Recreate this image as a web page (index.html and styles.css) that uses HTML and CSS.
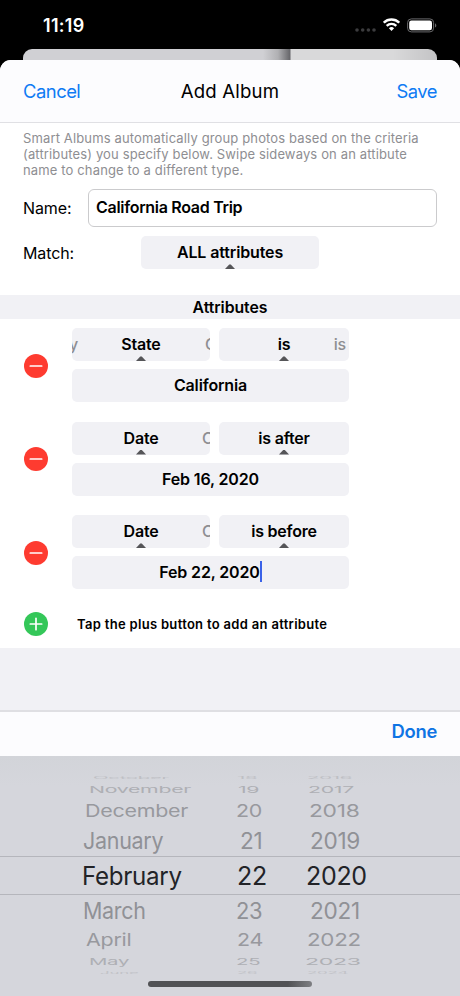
FILE: index.html
```html
<!DOCTYPE html>
<html lang="en">
<head>
<meta charset="utf-8">
<title>Add Album</title>
<link rel="stylesheet" href="styles.css">
</head>
<body>
<div class="phone">
  <div class="status">
    <span class="time">11:19</span>
    <div class="indicators">
      <svg class="dots" width="21" height="4" viewBox="0 0 21 4"><g fill="#3c3c3e"><circle cx="2" cy="2" r="1.8"/><circle cx="7.7" cy="2" r="1.8"/><circle cx="13.4" cy="2" r="1.8"/><circle cx="19" cy="2" r="1.8"/></g></svg>
      <svg class="wifi" width="17" height="13" viewBox="0 0 17 13"><g fill="none" stroke="#fff" stroke-width="2.4"><path d="M.8 4.7a11 11 0 0 1 15.4 0"/><path d="M3.7 7.8a6.9 6.9 0 0 1 9.6 0"/></g><path d="M8.5 12.9 5.9 10.2a3.8 3.8 0 0 1 5.2 0Z" fill="#fff"/></svg>
      <svg class="battery" width="30" height="15" viewBox="0 0 30 15"><rect x=".6" y=".9" width="26" height="13" rx="3.7" fill="none" stroke="#69696b" stroke-width="1"/><rect x="2.2" y="2.5" width="22.8" height="9.8" rx="2.2" fill="#fff"/><path d="M28 5.2c1.8.8 1.8 3.6 0 4.4Z" fill="#69696b"/></svg>
    </div>
  </div>
  <div class="behind"></div>
  <main class="sheet">
    <header class="nav"><span class="link cancel">Cancel</span><h1>Add Album</h1><span class="link save">Save</span></header>
    <section class="intro">
      <p class="hint">Smart Albums automatically group photos based on the criteria<br>(attributes) you specify below. Swipe sideways on an attibute<br>name to change to a different type.</p>
      <div class="field"><span class="label">Name:</span><div class="input"><span>California Road Trip</span></div></div>
      <div class="field match"><span class="label">Match:</span><div class="pill picker match-pill"><span>ALL attributes</span></div></div>
    </section>
    <h2 class="section"><span>Attributes</span></h2>
    <section class="attributes">
      <div class="attr">
        <svg class="btn" width="24" height="24" viewBox="0 0 24 24"><circle cx="12" cy="12" r="12" fill="#fe3b30"/><path d="M6.3 12h11.4" stroke="#fff" stroke-width="1.7" stroke-linecap="round"/></svg>
        <div class="pills">
          <div class="pill picker"><span class="peek left">y</span><span>State</span><span class="peek right-cut">C</span></div>
          <div class="pill picker"><span>is</span><span class="peek right">is</span></div>
          <div class="pill value"><span>California</span></div>
        </div>
      </div>
      <div class="attr">
        <svg class="btn" width="24" height="24" viewBox="0 0 24 24"><circle cx="12" cy="12" r="12" fill="#fe3b30"/><path d="M6.3 12h11.4" stroke="#fff" stroke-width="1.7" stroke-linecap="round"/></svg>
        <div class="pills">
          <div class="pill picker"><span>Date</span><span class="peek right-date">C</span></div>
          <div class="pill picker"><span>is after</span></div>
          <div class="pill value"><span>Feb 16, 2020</span></div>
        </div>
      </div>
      <div class="attr">
        <svg class="btn" width="24" height="24" viewBox="0 0 24 24"><circle cx="12" cy="12" r="12" fill="#fe3b30"/><path d="M6.3 12h11.4" stroke="#fff" stroke-width="1.7" stroke-linecap="round"/></svg>
        <div class="pills">
          <div class="pill picker"><span>Date</span><span class="peek right-date">C</span></div>
          <div class="pill picker"><span>is before</span></div>
          <div class="pill value"><span class="editing">Feb 22, 2020</span></div>
        </div>
      </div>
      <div class="add">
        <svg class="btn" width="24" height="24" viewBox="0 0 24 24"><circle cx="12" cy="12" r="12" fill="#34c759"/><path d="M6.3 12h11.4M12 6.3v11.4" stroke="#fff" stroke-width="1.7" stroke-linecap="round"/></svg>
        <span class="add-text">Tap the plus button to add an attribute</span>
      </div>
    </section>
    <div class="spacer"></div>
    <div class="toolbar"><span class="done">Done</span></div>
    <section class="wheel">
      <div class="row r1"><span class="m">October</span><span class="d">18</span><span class="y">2016</span></div>
      <div class="row r2"><span class="m">November</span><span class="d">19</span><span class="y">2017</span></div>
      <div class="row r3"><span class="m">December</span><span class="d">20</span><span class="y">2018</span></div>
      <div class="row r4"><span class="m">January</span><span class="d">21</span><span class="y">2019</span></div>
      <div class="row r5"><span class="m">February</span><span class="d">22</span><span class="y">2020</span></div>
      <div class="row r6"><span class="m">March</span><span class="d">23</span><span class="y">2021</span></div>
      <div class="row r7"><span class="m">April</span><span class="d">24</span><span class="y">2022</span></div>
      <div class="row r8"><span class="m">May</span><span class="d">25</span><span class="y">2023</span></div>
      <div class="row r9"><span class="m">June</span><span class="d">26</span><span class="y">2024</span></div>
      <div class="home"></div>
    </section>
  </main>
</div>
</body>
</html>
```
FILE: styles.css
```css
* { box-sizing: border-box; }
body { margin: 0; background: #000; font-family: Inter, "Liberation Sans", sans-serif; color: #000; }
.phone { width: 460px; height: 996px; overflow: hidden; display: flex; flex-direction: column; background: #000; }
.status { height: 49px; flex: none; display: flex; justify-content: space-between; padding: 0 23px 0 43px; }
.time { color: #fff; font-size: 18px; font-weight: 600; line-height: 22px; padding-top: 15px; letter-spacing: .3px; }
.indicators { display: flex; align-items: flex-start; padding-top: 18px; }
.dots { margin-top: 10px; margin-right: 7px; }
.wifi { margin-right: 7px; }
.behind { height: 11px; flex: none; margin: 0 23px; border-radius: 9px 9px 0 0; background: linear-gradient(90deg, #d0d0d4 0, #d0d0d4 240px, #b0b0b3 255px, #66666a 267px, #d9d9da 268px, #d9d9da 370px, #c3c3c5 414px); }
.sheet { flex: 1; display: flex; flex-direction: column; background: #fff; border-radius: 11px 11px 0 0; overflow: hidden; }
.nav { height: 63px; flex: none; display: grid; grid-template-columns: 1fr auto 1fr; align-items: center; padding: 0 23px; background: #fcfcfe; border-bottom: 1px solid #e0e0e4; font-size: 18.4px; }
h1 { margin: 0; font-size: 18.6px; font-weight: 400; letter-spacing: .2px; }
.link { color: #0f7bf4; }
.cancel { letter-spacing: -.5px; }
.save { text-align: right; letter-spacing: -.5px; }
.intro { height: 172px; flex: none; padding: 8px 23px 0; }
.hint { margin: 0; height: 58px; font-size: 13px; line-height: 15.8px; color: #8e8e92; letter-spacing: .14px; white-space: nowrap; }
.field { display: flex; align-items: center; height: 38px; }
.label { width: 65px; font-size: 16px; letter-spacing: -.1px; }
.input { flex: 1; height: 38px; border: 1px solid #cbcbcd; border-radius: 6px; padding: 0 7px; line-height: 35px; font-size: 16px; font-weight: 600; letter-spacing: -.3px; }
.match { height: 33px; margin-top: 9px; }
.pill { position: relative; overflow: hidden; display: flex; justify-content: center; align-items: center; height: 33px; border-radius: 5px; background: #f1f1f5; font-size: 16px; font-weight: 600; letter-spacing: -.2px; line-height: 31px; white-space: nowrap; }
.picker::after { content: ""; position: absolute; bottom: 0; left: 50%; width: 10px; height: 5px; margin-left: -5px; background: #555558; clip-path: polygon(0 100%, 42% 10%, 58% 10%, 100% 100%); }
.match-pill { width: 178px; margin-left: 53px; letter-spacing: -.13px; }
.section { margin: 0; height: 24px; flex: none; background: #f1f1f5; text-align: center; font-size: 15.8px; line-height: 25px; font-weight: 600; letter-spacing: -.05px; }
.attributes { height: 329px; flex: none; padding: 9px 0 0 24px; }
.attr { display: flex; align-items: center; gap: 24px; height: 75px; margin-bottom: 18.5px; }
.btn { flex: none; display: block; }
.pills { display: grid; grid-template-columns: 138px 130px; gap: 8px 9px; margin-top: -1px; }
.value { grid-column: span 2; line-height: 32px; padding-bottom: 1px; letter-spacing: -.15px; }
.peek { position: absolute; top: 0; line-height: 33px; color: #8e8e92; font-weight: 500; }
.left { left: -3px; }
.right { right: 3px; }
.right-cut { left: 133px; }
.right-date { left: 130px; }
.editing { position: relative; left: -1px; }
.editing::after { content: ""; position: absolute; right: -2px; top: 5px; width: 2px; height: 21px; background: #3a62e8; }
.add { display: flex; align-items: center; gap: 29px; height: 24px; margin-top: 22px; }
.attr:nth-of-type(3) { margin-bottom: 0; }
.add-text { font-size: 13px; font-weight: 600; letter-spacing: .31px; }
.spacer { height: 62px; flex: none; background: #f1f1f5; }
.toolbar { height: 46px; flex: none; border-top: 2px solid #dfdfe3; background: #fcfcfe; padding-right: 23px; text-align: right; line-height: 38px; }
.done { color: #0f74e4; font-size: 18.4px; font-weight: 600; letter-spacing: -.3px; }
.wheel { flex: 1; background: linear-gradient(#d2d4d9, #d5d6dc 30px); padding-top: 17px; }
.row { display: grid; grid-template-columns: 154px 70px 100px; padding-left: 83px; align-items: center; height: 32px; color: #909196; font-size: 22.6px; line-height: 30px; white-space: nowrap; }
.row span { margin: -15px 0; transform-origin: 0 50%; letter-spacing: -.3px; }
.r1 { height: 10px; color: #bebfc4; }
.r1 span { transform: scale(.9, .15); }
.r1 .m { translate: 10px 0; }
.r2 { height: 14px; color: #aeafb4; }
.r2 span { transform: scale(.94, .42); }
.r2 .m { translate: 6px 0; }
.r2 .d, .r2 .y { translate: 1px 0; }
.r3 { height: 28px; color: #98999e; }
.r3 span { transform: scale(.95, .76); }
.r3 .m { translate: 2px 0; }
.r3 .d { translate: -1px 0; }
.r3 .y { translate: 2px 0; transform: scale(1.01, .76); }
.r4 { height: 31px; }
.r4 .m { transform: scaleX(.95); }
.r4 .d { translate: 3px 0; }
.r4 .y { translate: 3px 0; }
.r5 { height: 39px; border-top: 1px solid #b5b6bc; border-bottom: 1px solid #b5b6bc; color: #222327; font-size: 25px; }
.r5 .m { transform: scaleX(.965); translate: -1px 0; }
.r5 .y { translate: -1px 0; }
.r6 { height: 31px; }
.r6 .m { transform: scaleX(.95); }
.r6 .d { translate: -1px 0; transform: scaleX(.97); }
.r6 .y { translate: 3px 0; }
.r7 { height: 28px; color: #98999e; }
.r7 span { transform: scale(.95, .76); }
.r7 .m { translate: 3px 0; }
.r7 .y { transform: scale(.99, .76); }
.r8 { height: 16px; color: #aeafb4; }
.r8 span { transform: scale(.9, .42); }
.r8 .m { translate: 6px 0; }
.r8 .d { translate: -1px 0; }
.r8 .y { translate: -2px 0; transform: scale(1.02, .42); }
.r9 { height: 6px; color: #c2c3c8; }
.r9 span { transform: scale(.75, .13); }
.r9 .m { translate: 17px 0; }
.home { width: 164px; height: 6px; border-radius: 3px; margin: 5px 0 0 148px; background: linear-gradient(90deg, #515255, #515255 140px, #7e7f83); }
```
